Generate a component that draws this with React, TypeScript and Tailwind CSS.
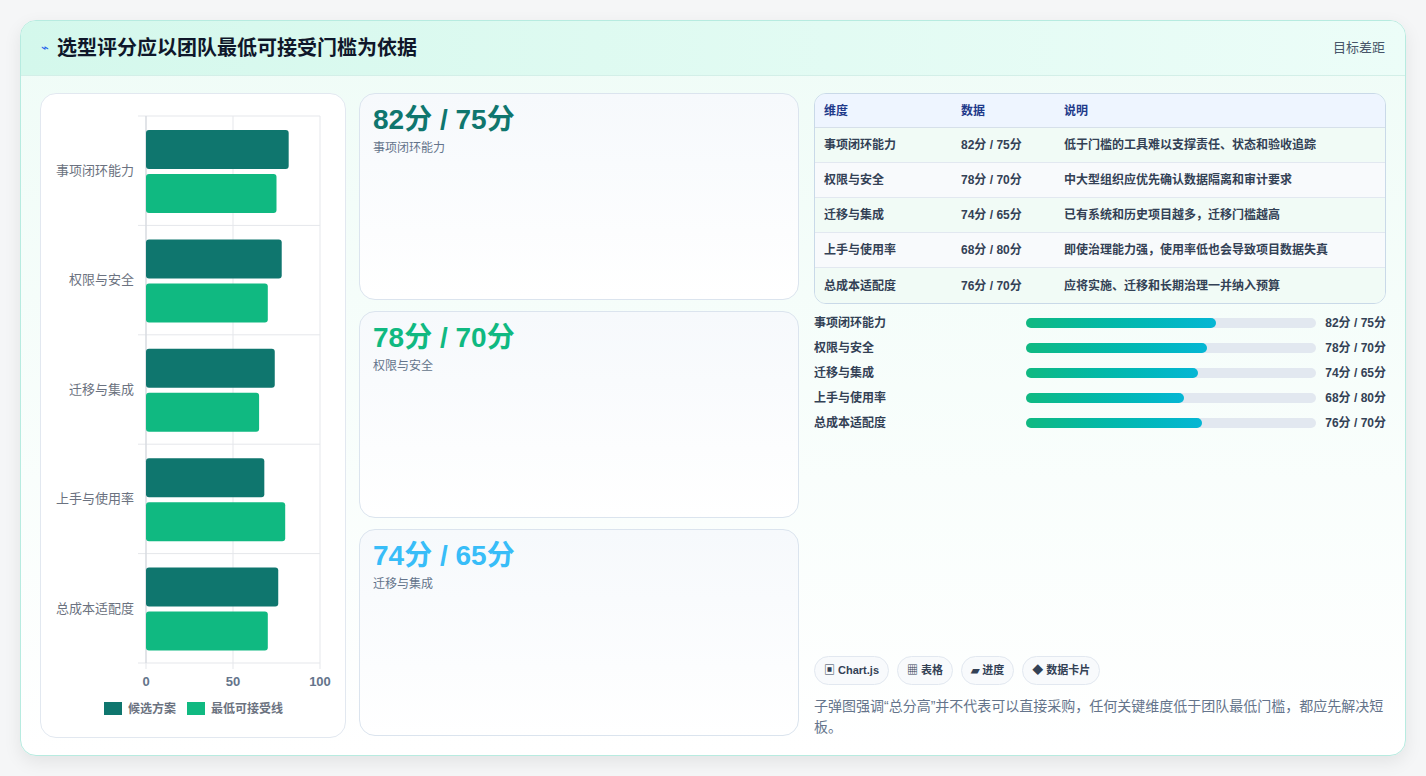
import type { ReactElement } from "react";

const rows = [
  { name: "事项闭环能力", a: 82, b: 75, note: "低于门槛的工具难以支撑责任、状态和验收追踪" },
  { name: "权限与安全", a: 78, b: 70, note: "中大型组织应优先确认数据隔离和审计要求" },
  { name: "迁移与集成", a: 74, b: 65, note: "已有系统和历史项目越多，迁移门槛越高" },
  { name: "上手与使用率", a: 68, b: 80, note: "即使治理能力强，使用率低也会导致项目数据失真" },
  { name: "总成本适配度", a: 76, b: 70, note: "应将实施、迁移和长期治理一并纳入预算" },
];

const font = { fontFamily: '"Liberation Sans", "Noto Sans CJK SC", sans-serif' };

function Chart(): ReactElement {
  const x0 = 105;
  const w = 174;
  const top = 22;
  const band = 109.4;
  return (
    <svg width="305" height="644" className="block">
      {[0, 50, 100].map((v) => (
        <line key={v} x1={x0 + (w * v) / 100} x2={x0 + (w * v) / 100} y1={top} y2={top + band * 5 + 6} stroke="#e5e7eb" />
      ))}
      {[0, 1, 2, 3, 4, 5].map((i) => (
        <line key={i} x1={x0 - 8} x2={x0 + w} y1={top + band * i} y2={top + band * i} stroke="#e5e7eb" />
      ))}
      <line x1={x0} x2={x0} y1={top} y2={top + band * 5} stroke="#d1d5db" />
      {rows.map((r, i) => {
        const y = top + band * i;
        return (
          <g key={r.name}>
            <rect x={x0} y={y + 14} width={(w * r.a) / 100} height={39} rx="3" fill="#0f766e" />
            <rect x={x0} y={y + 58} width={(w * r.b) / 100} height={39} rx="3" fill="#10b981" />
            <text x={x0 - 12} y={y + 59} textAnchor="end" fontSize="13" fill="#6b7280">{r.name}</text>
          </g>
        );
      })}
      {[0, 50, 100].map((v) => (
        <text key={v} x={x0 + (w * v) / 100} y={592} textAnchor="middle" fontSize="13" fontWeight="700" fill="#64748b">{v}</text>
      ))}
      <rect x="63" y="608" width="18" height="13" fill="#0f766e" />
      <text x="87" y="619" fontSize="12" fontWeight="700" fill="#6b7280">候选方案</text>
      <rect x="146" y="608" width="18" height="13" fill="#10b981" />
      <text x="170" y="619" fontSize="12" fontWeight="700" fill="#6b7280">最低可接受线</text>
    </svg>
  );
}

export default function App(): ReactElement {
  const cards = [
    { r: rows[0], c: "text-[#0f766e]" },
    { r: rows[1], c: "text-[#10b981]" },
    { r: rows[2], c: "text-[#38bdf8]" },
  ];
  return (
    <div className="min-h-[776px] bg-[#f5f6f7] p-5" style={font}>
      <div className="overflow-hidden rounded-2xl border border-[#b7ebe0] bg-gradient-to-b from-[#effcf7] to-white shadow-[0_6px_18px_rgba(0,0,0,0.08)]">
        <header className="flex h-[55px] items-center justify-between border-b border-[#d3efe8] bg-gradient-to-r from-[#d4f8ec] to-[#ecfdf8] px-5">
          <div className="flex items-center gap-2">
            <span className="text-[13px] text-[#2563eb]">⌁</span>
            <h1 className="text-[20px] font-bold text-[#0f172a]">选型评分应以团队最低可接受门槛为依据</h1>
          </div>
          <span className="text-[13px] text-[#475569]">目标差距</span>
        </header>
        <div className="flex gap-[13px] px-[19px] pb-[17px] pt-[17px]">
          <div className="h-[645px] w-[306px] shrink-0 rounded-2xl border border-[#e2e8f0] bg-white">
            <Chart />
          </div>
          <div className="flex w-[440px] shrink-0 flex-col gap-[11px]">
            {cards.map(({ r, c }) => (
              <div key={r.name} className="h-[207px] rounded-2xl border border-[#dbe4ee] bg-gradient-to-b from-[#f6f9fc] to-white px-[13px] pt-[9px]">
                <div className={`text-[28px] font-bold leading-[34px] ${c}`}>{r.a}分 / {r.b}分</div>
                <div className="mt-[2px] text-[12px] text-[#64748b]">{r.name}</div>
              </div>
            ))}
          </div>
          <div className="ml-[2px] flex flex-1 flex-col">
            <div className="overflow-hidden rounded-xl border border-[#c9d9e8] text-[12px]">
              <div className="grid h-[34px] grid-cols-[137px_103px_1fr] items-center border-b border-[#d6e0ea] bg-[#eef5ff] px-[9px] font-bold text-[#1e3a8a]">
                <span>维度</span><span>数据</span><span>说明</span>
              </div>
              {rows.map((r, i) => (
                <div key={r.name} className={`grid h-[35px] grid-cols-[137px_103px_1fr] items-center px-[9px] font-bold text-[#334155] ${i < 4 ? "border-b border-[#e2e8f0]" : ""} ${i % 2 === 0 ? "bg-[#f1fbf6]" : "bg-[#f8fafc]"}`}>
                  <span>{r.name}</span><span>{r.a}分 / {r.b}分</span><span>{r.note}</span>
                </div>
              ))}
            </div>
            <div className="mt-[10px] flex flex-col gap-[7px]">
              {rows.map((r) => (
                <div key={r.name} className="flex h-[18px] items-center text-[12px] font-bold text-[#334155]">
                  <span className="w-[212px]">{r.name}</span>
                  <div className="h-[10px] w-[290px] rounded-full bg-[#e2e8f0]">
                    <div className="h-full rounded-full bg-gradient-to-r from-[#10b981] to-[#06b6d4]" style={{ width: `${r.a * 0.8}%` }} />
                  </div>
                  <span className="ml-auto">{r.a}分 / {r.b}分</span>
                </div>
              ))}
            </div>
            <div className="mt-auto flex gap-2">
              {["▣ Chart.js", "▦ 表格", "▰ 进度", "◆ 数据卡片"].map((t) => (
                <span key={t} className="flex h-[29px] items-center rounded-full border border-[#e2e8f0] bg-[#f8fafc] px-[9px] text-[11px] font-bold text-[#334155]">{t}</span>
              ))}
            </div>
            <p className="mt-[11px] text-[14px] text-[#64748b]">子弹图强调“总分高”并不代表可以直接采购，任何关键维度低于团队最低门槛，都应先解决短板。</p>
          </div>
        </div>
      </div>
    </div>
  );
}
